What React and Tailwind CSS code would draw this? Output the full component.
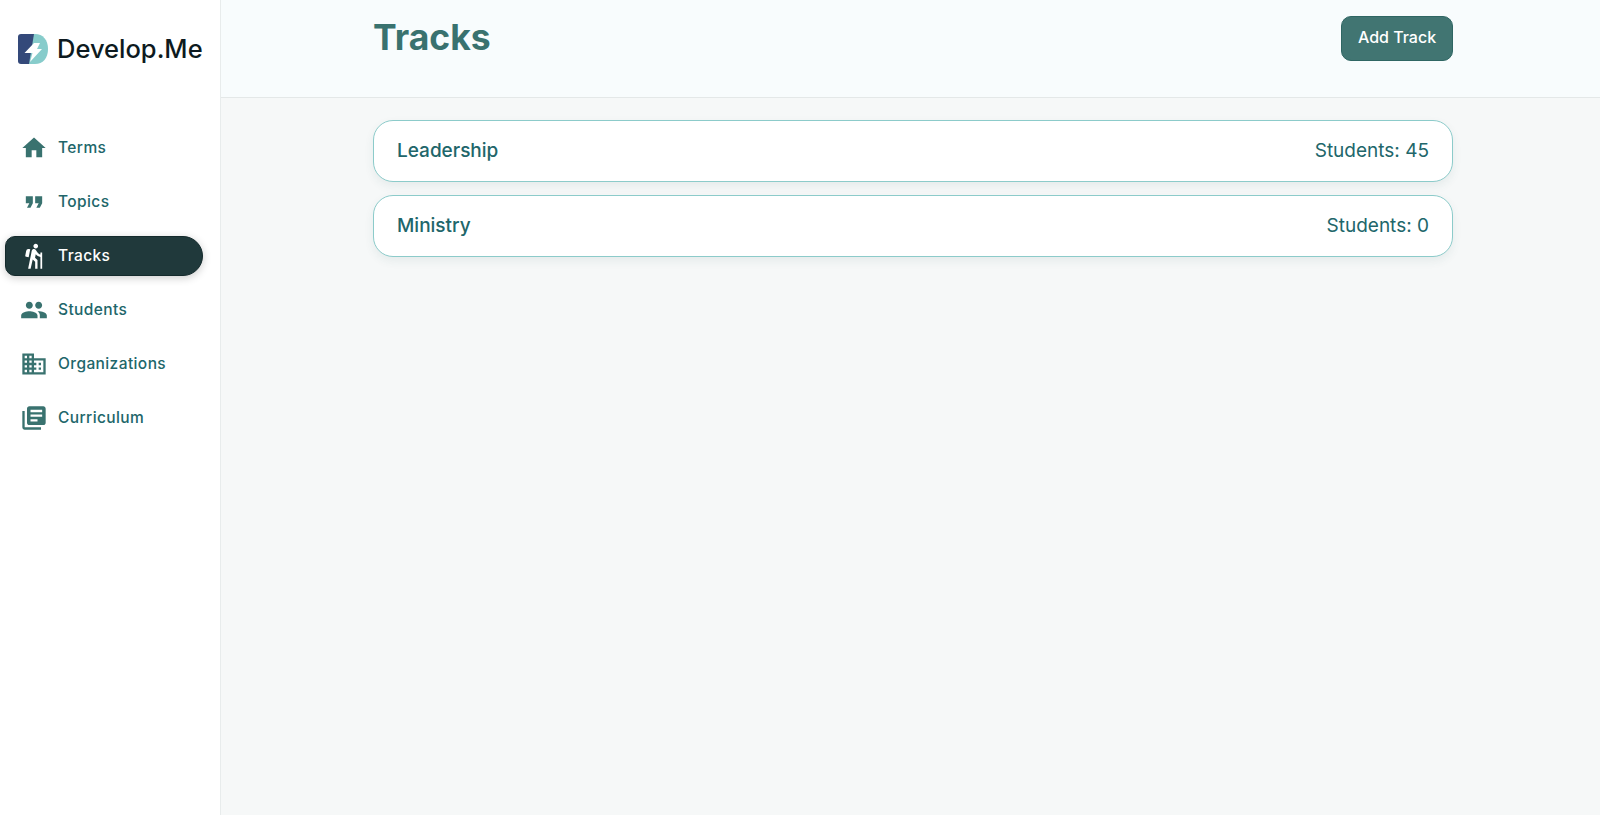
import React from 'react';
import { MdHome, MdFormatQuote, MdHiking, MdPeople, MdOutlineDomain, MdLibraryBooks } from 'react-icons/md';

const navItems = [
  { label: 'Terms', Icon: MdHome },
  { label: 'Topics', Icon: MdFormatQuote },
  { label: 'Tracks', Icon: MdHiking, active: true },
  { label: 'Students', Icon: MdPeople },
  { label: 'Organizations', Icon: MdOutlineDomain },
  { label: 'Curriculum', Icon: MdLibraryBooks },
];

const tracks = [
  { name: 'Leadership', students: 45 },
  { name: 'Ministry', students: 0 },
];

const Logo = () => (
  <svg width="30" height="30" viewBox="0 0 30 30" className="shrink-0">
    <path d="M13 0h4c8 0 13 6 13 15s-5 15-13 15H9z" fill="#87cccb" />
    <path d="M3 0h13l-5 30H3a3 3 0 0 1-3-3V3a3 3 0 0 1 3-3z" fill="#34497a" />
    <path d="M16 9h6l-3 6h5L12 28l2.5-9H6.500z" fill="#ffffff" />
  </svg>
);

const NavItem = ({ label, Icon, active }) => (
  <div
    className={
      active
        ? 'flex h-[40px] w-[198px] items-center gap-[10px] rounded-l-[10px] rounded-r-[20px] border border-[#142a2c] bg-[#20393b] pl-[14px] text-white shadow-[0_2px_8px_rgba(0,0,0,0.2)]'
        : 'flex h-[40px] items-center gap-[10px] pb-[1px] pl-[15px] text-[#21666a]'
    }
  >
    <span className={active ? 'flex w-[28px] justify-center text-white' : 'flex w-[28px] justify-center text-[#39726f]'}>
      <Icon size={28} />
    </span>
    <span className="text-[15.5px] font-medium tracking-[0.4px]">{label}</span>
  </div>
);

const TrackRow = ({ name, students }) => (
  <div className="flex h-[62px] items-center justify-between rounded-[20px] border border-[#8ccbca] bg-white px-[23px] text-[19px] text-[#21666a] shadow-[0_4px_10px_rgba(40,90,90,0.08)]">
    <span className="font-medium">{name}</span>
    <span>Students: {students}</span>
  </div>
);

export default function App() {
  return (
    <div className="flex h-[815px] w-[1600px] overflow-hidden bg-[#f6f8f8] font-['Inter',sans-serif]">
      <aside className="flex w-[221px] shrink-0 flex-col border-r border-[#e8ecec] bg-white pl-[5px]">
        <div className="flex items-center gap-[9px] pl-[13px] pt-[34px]">
          <Logo />
          <span className="text-[25.5px] leading-[30px] font-medium text-[#0d1a20]">Develop.Me</span>
        </div>
        <nav className="mt-[64px] flex flex-col gap-[14px]">
          {navItems.map((item) => (
            <NavItem key={item.label} {...item} />
          ))}
        </nav>
      </aside>
      <main className="min-w-0 flex-1">
        <header className="flex h-[98px] items-start justify-between border-b border-[#e4e8e8] bg-[#f8fcfd] pl-[152px] pr-[147px] pt-[16px]">
          <h1 className="text-[35.5px] leading-[44px] font-bold text-[#39726f]">Tracks</h1>
          <button className="h-[45px] w-[112px] rounded-[10px] border border-[#2f6663] bg-[#417572] pb-[3px] text-[16px] font-medium text-white">
            Add Track
          </button>
        </header>
        <section className="flex flex-col gap-[13px] pl-[152px] pr-[147px] pt-[22px]">
          {tracks.map((track) => (
            <TrackRow key={track.name} {...track} />
          ))}
        </section>
      </main>
    </div>
  );
}
